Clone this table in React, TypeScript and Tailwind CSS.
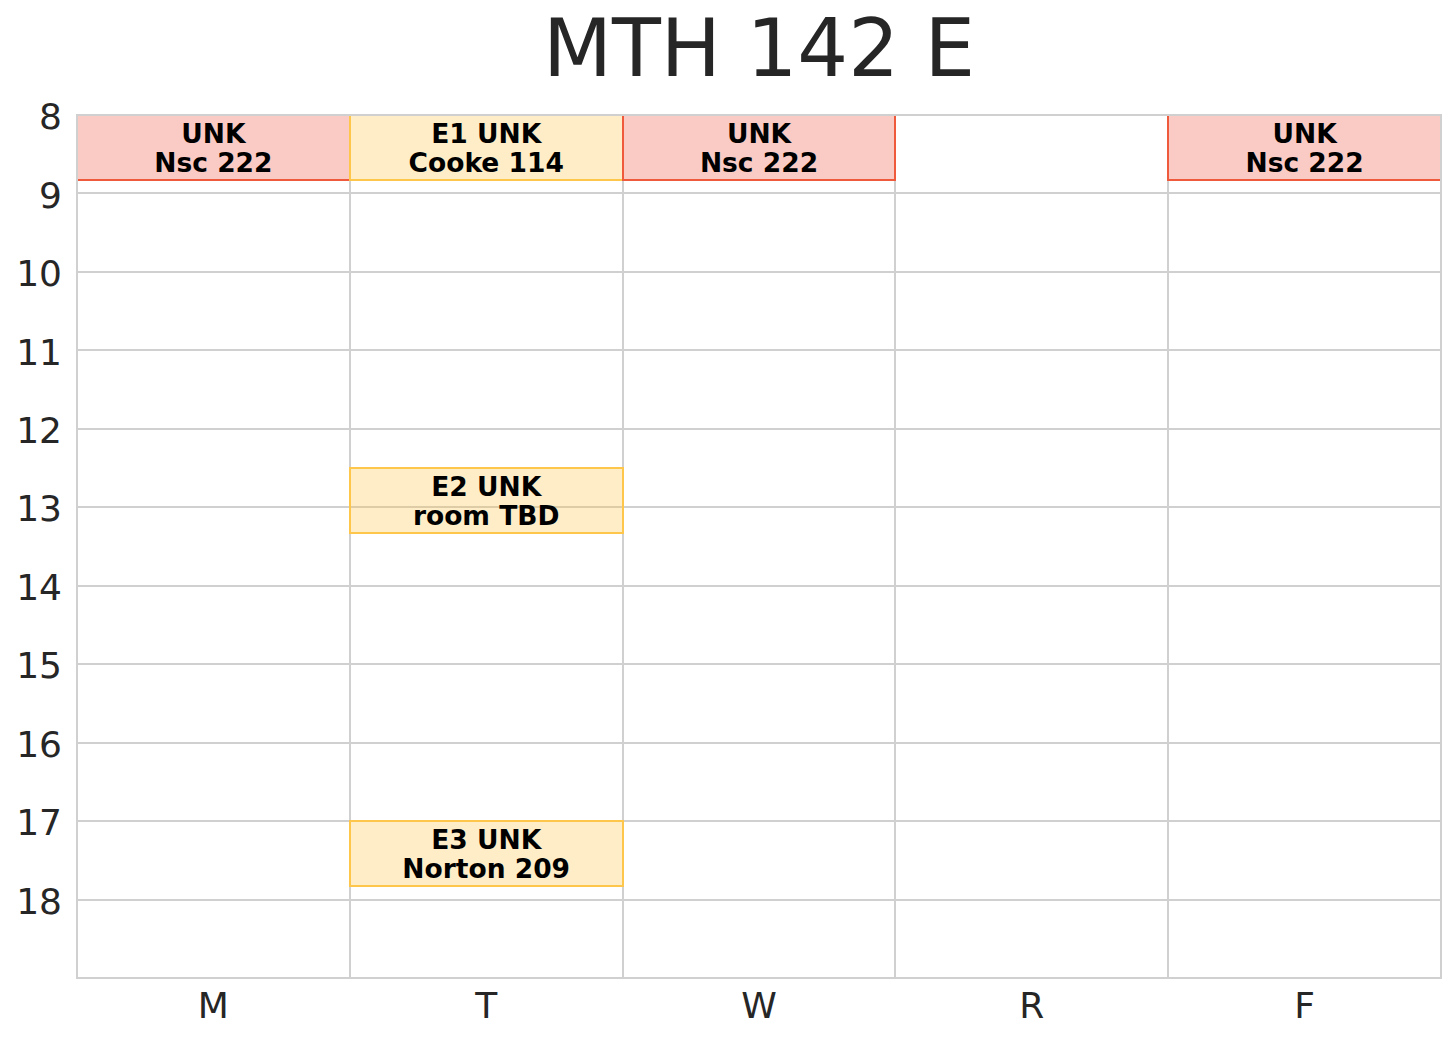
import React from "react";

const HOUR = 863 / 11;
const COL = 1364 / 5;

const days = ["M", "T", "W", "R", "F"];
const hours = [8, 9, 10, 11, 12, 13, 14, 15, 16, 17, 18];

type Block = {
  day: number;
  start: number;
  end: number;
  title: string;
  room: string;
  kind: "lec" | "exam";
};

const blocks: Block[] = [
  { day: 0, start: 8, end: 8 + 50 / 60, title: "UNK", room: "Nsc 222", kind: "lec" },
  { day: 1, start: 8, end: 8 + 50 / 60, title: "E1 UNK", room: "Cooke 114", kind: "exam" },
  { day: 2, start: 8, end: 8 + 50 / 60, title: "UNK", room: "Nsc 222", kind: "lec" },
  { day: 4, start: 8, end: 8 + 50 / 60, title: "UNK", room: "Nsc 222", kind: "lec" },
  { day: 1, start: 12.5, end: 12.5 + 50 / 60, title: "E2 UNK", room: "room TBD", kind: "exam" },
  { day: 1, start: 17, end: 17 + 50 / 60, title: "E3 UNK", room: "Norton 209", kind: "exam" },
];

export default function App() {
  return (
    <div className="w-[1456px] h-[1040px] bg-white text-[#262626] font-['DejaVu_Sans',sans-serif]">
      {/* Title */}
      <div className="h-[115px] w-[1441px] pl-[77px] pt-[9px]">
        <h1 className="text-[80px] leading-[80px] text-center">MTH 142 E</h1>
      </div>

      <div className="flex">
        {/* Y axis */}
        <div className="w-[77px] h-[863px] pr-[15px]">
          <div className="flex flex-col mt-[-37px]">
            {hours.map((h) => (
              <div key={h} className="h-[78.4545px] flex items-center justify-end text-[36px] leading-[36px]">
                {h}
              </div>
            ))}
          </div>
        </div>

        {/* Plot */}
        <div className="relative w-[1364px] h-[863px]">
          <div className="grid grid-cols-5 grid-rows-[repeat(11,1fr)] w-full h-full">
            {hours.map((h, r) =>
              days.map((d, c) => (
                <div
                  key={h + d}
                  className={`${c < 4 ? "border-r-2" : ""} ${r < 10 ? "border-b-2" : ""} border-[#d0d0d0] translate-x-[1px] translate-y-[1px]`}
                />
              ))
            )}
          </div>

          {blocks.map((b, i) => (
            <div
              key={i}
              className={`absolute flex flex-col items-center justify-center border-2 text-black font-bold text-[26.5px] leading-[29px] ${
                b.kind === "lec" ? "bg-[#ef533a]/30 border-[#f05a3c]" : "bg-[#fdc344]/30 border-[#fec64a]"
              }`}
              style={{
                left: b.day * COL - 1,
                top: (b.start - 8) * HOUR - 1,
                width: COL + 2,
                height: (b.end - b.start) * HOUR + 2,
              }}
            >
              <span>{b.title}</span>
              <span>{b.room}</span>
            </div>
          ))}

          {/* frame */}
          <div className="absolute inset-0 outline-2 outline-[#d0d0d0] -outline-offset-1 pointer-events-none" />
        </div>
      </div>

      {/* X axis */}
      <div className="flex w-[1441px] pl-[77px] pt-[10px]">
        {days.map((d) => (
          <div key={d} className="flex-1 text-center text-[36px] leading-[36px]">
            {d}
          </div>
        ))}
      </div>
    </div>
  );
}
